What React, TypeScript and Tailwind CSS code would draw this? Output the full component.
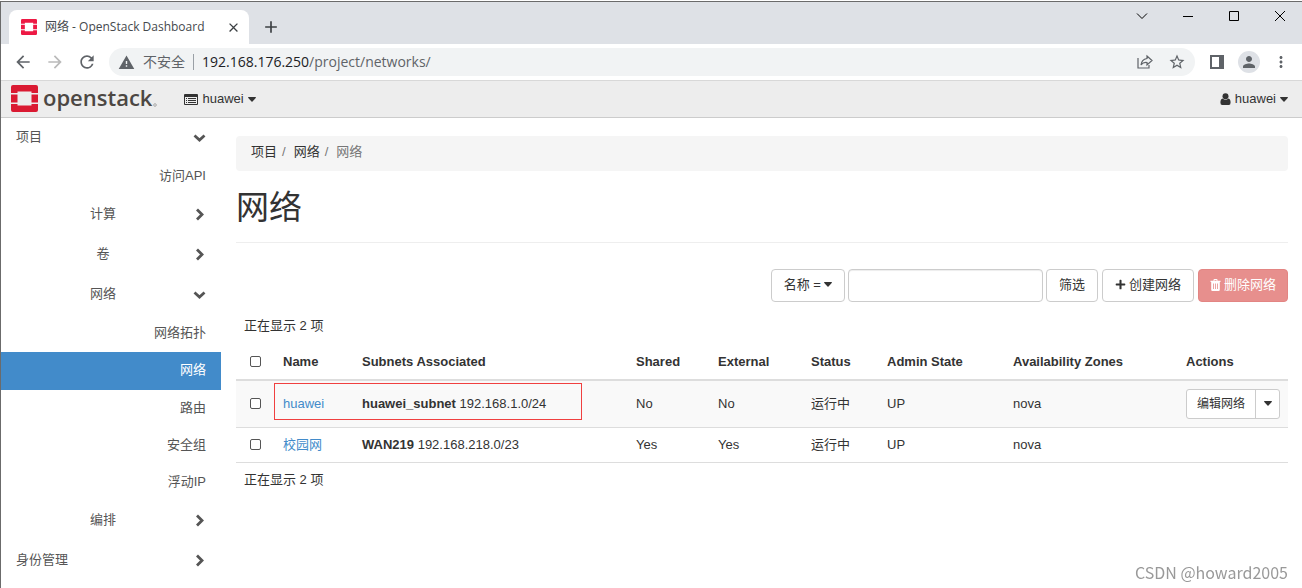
import type { ReactNode } from "react";
import { FaPlus } from "react-icons/fa";
import { MdAdd, MdArrowBack, MdArrowForward, MdClose, MdMoreVert, MdPerson, MdRefresh, MdStarBorder, MdWarning } from "react-icons/md";

interface NavItem {
  label: string;
  kind: "root" | "group" | "leaf";
  open?: boolean;
  active?: boolean;
}

const navItems: NavItem[] = [
  { label: "项目", kind: "root", open: true },
  { label: "访问API", kind: "leaf" },
  { label: "计算", kind: "group" },
  { label: "卷", kind: "group" },
  { label: "网络", kind: "group", open: true },
  { label: "网络拓扑", kind: "leaf" },
  { label: "网络", kind: "leaf", active: true },
  { label: "路由", kind: "leaf" },
  { label: "安全组", kind: "leaf" },
  { label: "浮动IP", kind: "leaf" },
  { label: "编排", kind: "group" },
  { label: "身份管理", kind: "root" },
];

const networks = [
  { name: "huawei", subnet: "huawei_subnet", cidr: "192.168.1.0/24", shared: "No", external: "No", marked: true, editable: true },
  { name: "校园网", subnet: "WAN219", cidr: "192.168.218.0/23", shared: "Yes", external: "Yes", marked: false, editable: false },
];

function Mark({ className, color }: { className: string; color: string }) {
  return (
    <svg viewBox="0 0 54 54" className={className} fill={color} aria-hidden="true">
      <path d="M4 0H50Q54 0 54 4V16H41V13H13V16H0V4Q0 0 4 0Z" />
      <path d="M0 19H13V35H0ZM41 19H54V35H41Z" />
      <path d="M0 38H13V41H41V38H54V50Q54 54 50 54H4Q0 54 0 50Z" />
    </svg>
  );
}

function Caret() {
  return (
    <svg width="8" height="5" viewBox="0 0 8 5" fill="currentColor" aria-hidden="true">
      <path d="M0.500 0H7.500Q8.200 0.300 7.700 1L4.500 4.600Q4 5 3.500 4.600L0.300 1Q-0.200 0.300 0.500 0Z" />
    </svg>
  );
}

function Chevron({ open }: { open?: boolean }) {
  return (
    <svg width="13" height="13" viewBox="0 0 13 13" fill="none" stroke="currentColor" strokeWidth="2.8" aria-hidden="true">
      <path d={open ? "M1.500 4.500L6.500 9L11.500 4.500" : "M4 1.500L9 6.500L4 11.500"} />
    </svg>
  );
}

function ListIcon() {
  return (
    <svg width="14" height="11" viewBox="0 0 14 11" fill="currentColor" aria-hidden="true">
      <path d="M1 0H13Q14 0 14 1V10Q14 11 13 11H1Q0 11 0 10V1Q0 0 1 0ZM1 3V10H13V3Z" fillRule="evenodd" />
      <path d="M2 4H3V5H2ZM4 4H12V5H4ZM2 6H3V7H2ZM4 6H12V7H4ZM2 8H3V9H2ZM4 8H12V9H4Z" />
    </svg>
  );
}

function UserIcon() {
  return (
    <svg width="11" height="12" viewBox="0 0 11 12" fill="currentColor" aria-hidden="true">
      <circle cx="5.500" cy="3.200" r="3" />
      <path d="M2.600 5.500Q5.500 8.200 8.400 5.500Q10.600 6 10.600 9.500Q10.600 12 8.800 12H2.200Q0.400 12 0.400 9.500Q0.400 6 2.600 5.500Z" />
    </svg>
  );
}

function TrashIcon() {
  return (
    <svg width="11" height="12" viewBox="0 0 11 12" fill="currentColor" aria-hidden="true">
      <path d="M3.500 1.800V1Q3.500 0 4.500 0H6.500Q7.500 0 7.500 1V1.800H10.500V3H9.800V10.800Q9.800 12 8.600 12H2.400Q1.200 12 1.200 10.800V3H0.500V1.800ZM4.500 1V1.800H6.500V1ZM3 4.500V10H3.800V4.500ZM5.100 4.500V10H5.900V4.500ZM7.200 4.500V10H8V4.500Z" fillRule="evenodd" />
    </svg>
  );
}

function BrowserChrome() {
  return (
    <div className="font-['Open_Sans','Noto_Sans_CJK_SC',sans-serif]">
      <div className="h-[42px] bg-[#dee1e6] flex justify-between pl-2">
        <div className="flex items-end">
          <div className="w-[240px] h-[34px] bg-white rounded-t-lg flex items-center pl-3 pr-2 text-xs text-[#45494d]">
            <Mark className="w-4 h-4 mr-2" color="#ed1944" />
            <span className="flex-1 whitespace-nowrap">网络 - OpenStack Dashboard</span>
            <button aria-label="Close tab" className="text-[#3c4043]">
              <MdClose size={15} />
            </button>
          </div>
          <button aria-label="New tab" className="ml-3 mb-[7px] text-[#3c4043]">
            <MdAdd size={20} />
          </button>
        </div>
        <div className="flex gap-[34px] pr-4 pt-2 text-black">
          <button aria-label="Search tabs" className="h-3">
            <svg width="12" height="12" viewBox="0 0 12 12" fill="none" stroke="currentColor">
              <path d="M1 3.5L6 8.5L11 3.5" />
            </svg>
          </button>
          <button aria-label="Minimize" className="h-3">
            <svg width="12" height="12" viewBox="0 0 12 12" fill="none" stroke="currentColor">
              <path d="M1 6.5H11" />
            </svg>
          </button>
          <button aria-label="Maximize" className="h-3">
            <svg width="12" height="12" viewBox="0 0 12 12" fill="none" stroke="currentColor">
              <path d="M1.5 1.5H10.5V10.5H1.5Z" />
            </svg>
          </button>
          <button aria-label="Close" className="h-3">
            <svg width="12" height="12" viewBox="0 0 12 12" fill="none" stroke="currentColor">
              <path d="M1 1L11 11M11 1L1 11" />
            </svg>
          </button>
        </div>
      </div>
      <div className="h-9 bg-white flex items-center pl-3 pr-3 text-[#5f6368]">
        <button aria-label="Back">
          <MdArrowBack size={20} />
        </button>
        <button aria-label="Forward" className="ml-3 text-[#bababa]">
          <MdArrowForward size={20} />
        </button>
        <button aria-label="Reload" className="ml-3">
          <MdRefresh size={20} />
        </button>
        <div className="flex-1 min-w-0 ml-3 h-7 rounded-full bg-[#f1f3f4] flex items-center pl-[9px] pr-[9px] text-sm">
          <MdWarning size={17} />
          <span className="ml-2 whitespace-nowrap">不安全</span>
          <span className="w-px h-4 bg-[#9aa0a6] mx-2" />
          <span className="flex-1 whitespace-nowrap">
            <span className="text-[#202124]">192.168.176.250</span>/project/networks/
          </span>
          <button aria-label="Share">
            <svg width="16" height="16" viewBox="0 0 16 16" fill="none" stroke="currentColor" strokeWidth="1.2">
              <path d="M1 4V14H12V11" />
              <path d="M10 2L15 6.500L10 11V8.500Q6 8 4 11Q4.500 5.500 10 4.500Z" />
            </svg>
          </button>
          <button aria-label="Bookmark" className="ml-[15px]">
            <MdStarBorder size={18} />
          </button>
        </div>
        <button aria-label="Side panel" className="ml-[15px]">
          <svg width="14" height="14" viewBox="0 0 14 14" fill="currentColor">
            <path d="M0 0H14V14H0ZM2 2V12H9V2Z" fillRule="evenodd" />
          </svg>
        </button>
        <button aria-label="Profile" className="ml-[14px] w-[22px] h-[22px] rounded-full bg-[#dee1e6] flex items-center justify-center">
          <MdPerson size={18} />
        </button>
        <button aria-label="Menu" className="ml-3">
          <MdMoreVert size={18} />
        </button>
      </div>
    </div>
  );
}

function Navbar() {
  return (
    <header className="h-[38px] bg-[#ededed] border-y border-t-[#d8d8d8] border-b-[#ccc] flex items-center pl-[10px] pr-[14px]">
      <a href="#" className="flex items-center pb-px">
        <Mark className="w-[27px] h-[27px]" color="#da1a32" />
        <span className="ml-[5px] -mt-1 font-['Open_Sans',sans-serif] font-semibold text-[22px] leading-8 text-[#4c4743]">openstack</span>
        <svg width="4" height="4" viewBox="0 0 4 4" className="ml-px mt-3" fill="none" stroke="#aaa" aria-hidden="true">
          <circle cx="2" cy="2" r="1.3" />
        </svg>
      </a>
      <button className="ml-[27px] flex items-center">
        <ListIcon />
        <span className="mx-1">huawei</span>
        <Caret />
      </button>
      <button className="ml-auto flex items-center">
        <UserIcon />
        <span className="mx-1">huawei</span>
        <Caret />
      </button>
    </header>
  );
}

function Sidebar() {
  return (
    <nav className="w-[220px] shrink-0 text-[#555]">
      {navItems.map((item, i) =>
        item.kind === "leaf" ? (
          <a
            key={i}
            href="#"
            className={
              item.active
                ? "h-[38px] flex items-center justify-end pr-[15px] pb-[2px] bg-[#428bca] text-white"
                : "h-[37px] flex items-center justify-end pr-[15px] pb-[2px]"
            }
          >
            {item.label}
          </a>
        ) : (
          <button key={i} className="w-full h-10 flex items-center pr-[15px] pb-[2px]">
            <span className={item.kind === "root" ? "flex-1 pl-[15px] text-left" : "flex-1 pl-3 text-center"}>{item.label}</span>
            <Chevron open={item.open} />
          </button>
        )
      )}
    </nav>
  );
}

function Button({ children }: { children: ReactNode }) {
  return (
    <button className="h-[33px] px-3 pb-[2px] border border-[#ccc] rounded bg-white flex items-center gap-[3px] whitespace-nowrap">{children}</button>
  );
}

function Check({ label }: { label: string }) {
  return (
    <input
      type="checkbox"
      aria-label={label}
      className="appearance-none block w-[11px] h-[11px] ml-[6px] border border-[#555] rounded-[2px] bg-white"
    />
  );
}

function NetworkTable() {
  return (
    <table className="w-full table-fixed border-collapse text-left">
      <caption className="caption-top text-left px-2 h-[27px] leading-[18px]">正在显示 2 项</caption>
      <colgroup>
        <col className="w-[39px]" />
        <col className="w-[79px]" />
        <col />
        <col className="w-[82px]" />
        <col className="w-[93px]" />
        <col className="w-[76px]" />
        <col className="w-[126px]" />
        <col className="w-[173px]" />
        <col className="w-[110px]" />
      </colgroup>
      <thead>
        <tr className="h-[36px] border-b-2 border-[#ddd]">
          <th className="px-2">
            <Check label="Select all" />
          </th>
          <th className="px-2">Name</th>
          <th className="px-2">Subnets Associated</th>
          <th className="px-2">Shared</th>
          <th className="px-2">External</th>
          <th className="px-2">Status</th>
          <th className="px-2">Admin State</th>
          <th className="px-2">Availability Zones</th>
          <th className="px-2">Actions</th>
        </tr>
      </thead>
      <tbody>
        {networks.map((net) => (
          <tr key={net.name} className={net.editable ? "h-[47px] bg-[#f9f9f9] border-b border-[#ddd]" : "h-[35px] border-b border-[#ddd]"}>
            <td className="px-2">
              <Check label={net.name} />
            </td>
            <td className="px-2 relative">
              <a href="#" className="text-[#428bca]">
                {net.name}
              </a>
              {net.marked && <span className="absolute -left-px top-[2px] w-[308px] h-[37px] border border-[#f04040] pointer-events-none" />}
            </td>
            <td className="px-2">
              <b>{net.subnet}</b> {net.cidr}
            </td>
            <td className="px-2">{net.shared}</td>
            <td className="px-2">{net.external}</td>
            <td className="px-2">运行中</td>
            <td className="px-2">UP</td>
            <td className="px-2">nova</td>
            <td className="px-2">
              {net.editable && (
                <div className="h-[30px] flex border border-[#ccc] rounded-[3px] bg-white text-xs">
                  <button className="flex-1 border-r border-[#ccc] whitespace-nowrap">编辑网络</button>
                  <button aria-label="More actions" className="w-[23px] flex items-center justify-center">
                    <Caret />
                  </button>
                </div>
              )}
            </td>
          </tr>
        ))}
      </tbody>
    </table>
  );
}

export default function App() {
  return (
    <div className="min-h-screen pt-px bg-white">
      <div className="min-h-[calc(100vh-1px)] border-t border-l border-[#6b6b6b] text-[13px] leading-[18px] text-[#333] font-['Liberation_Sans','Noto_Sans_CJK_SC',sans-serif]">
        <BrowserChrome />
        <Navbar />
        <div className="flex">
          <Sidebar />
          <main className="flex-1 min-w-0 pl-[15px] pr-[14px] pt-[18px]">
            <nav className="h-[35px] px-[15px] pb-[3px] rounded bg-[#f5f5f5] flex items-center">
              <a href="#">项目</a>
              <span className="pl-[5px] pr-2 text-[#777]">/</span>
              <a href="#">网络</a>
              <span className="pl-[5px] pr-2 text-[#777]">/</span>
              <span className="text-[#777]">网络</span>
            </nav>
            <h1 className="h-[72px] pt-[17px] border-b border-[#eee] text-[33px] leading-10">网络</h1>
            <div className="mt-[26px] flex justify-end gap-[3px]">
              <Button>
                名称 = <Caret />
              </Button>
              <input aria-label="筛选条件" className="w-[195px] h-[33px] px-3 border border-[#ccc] rounded shadow-[inset_0_1px_1px_rgba(0,0,0,0.075)]" />
              <Button>筛选</Button>
              <div className="flex gap-1 pl-px">
                <Button>
                  <FaPlus size={11} />
                  创建网络
                </Button>
                <button disabled className="h-[33px] px-[11px] pb-[2px] border border-[#e38583] rounded bg-[#e78f8d] text-white flex items-center gap-[3px] whitespace-nowrap">
                  <TrashIcon />
                  删除网络
                </button>
              </div>
            </div>
            <div className="mt-[15px]">
              <NetworkTable />
            </div>
            <p className="mt-2 px-2">正在显示 2 项</p>
          </main>
        </div>
      </div>
      <p className="fixed right-[14px] bottom-1 font-['Noto_Sans_CJK_SC',sans-serif] text-base text-[#999]">CSDN @howard2005</p>
    </div>
  );
}
